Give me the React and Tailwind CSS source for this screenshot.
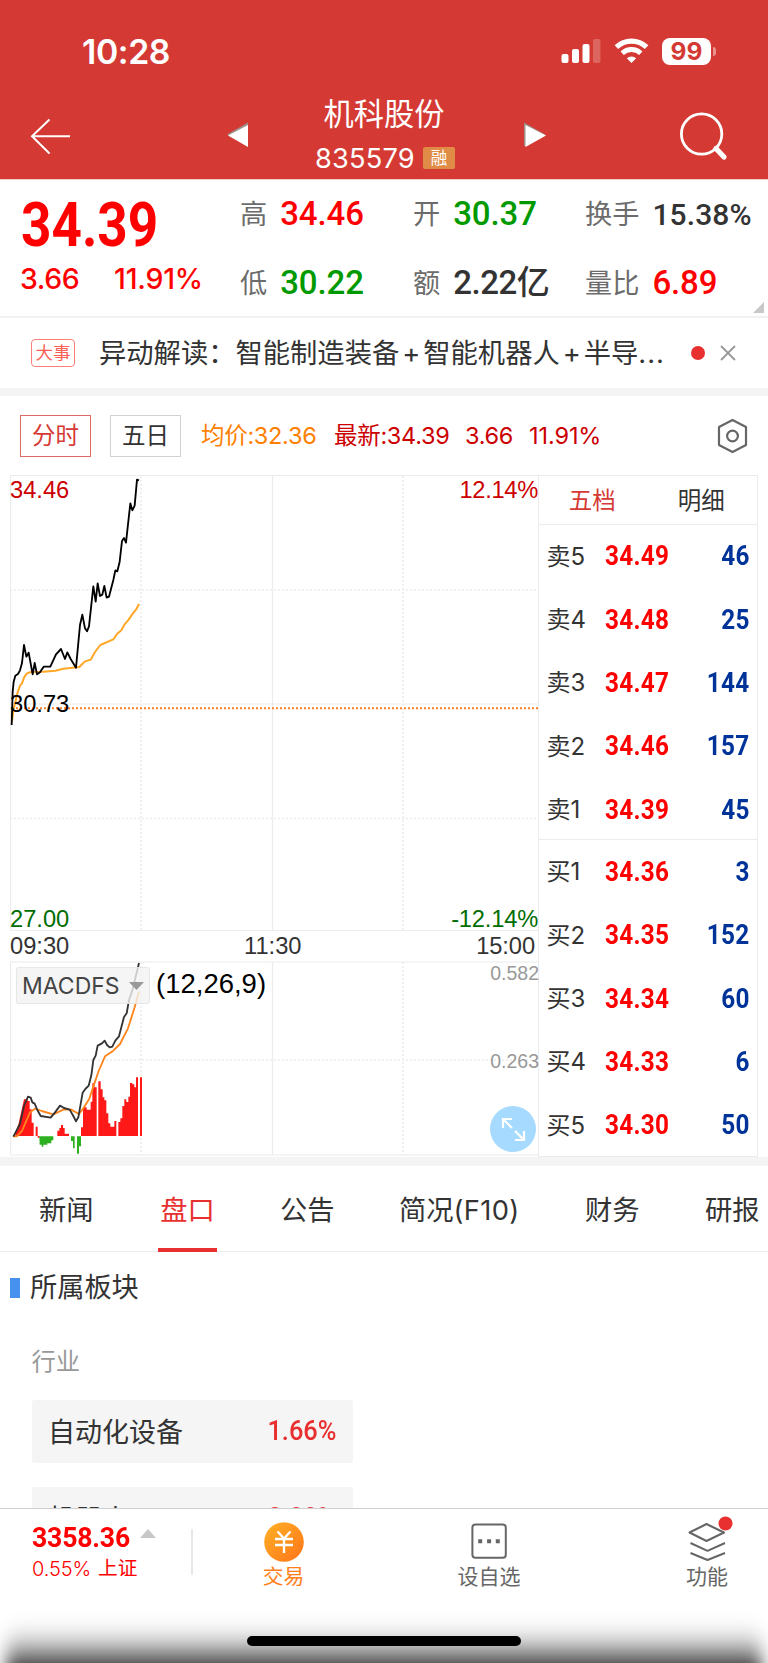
import React from "react";

const sans = "font-['Inter','Noto_Sans_CJK_SC',sans-serif]";
const din = "font-['Roboto','Noto_Sans_CJK_SC',sans-serif]";
const arial = "font-['Liberation_Sans','Noto_Sans_CJK_SC',sans-serif]";

const sells = [
  ["卖5", "34.49", "46"],
  ["卖4", "34.48", "25"],
  ["卖3", "34.47", "144"],
  ["卖2", "34.46", "157"],
  ["卖1", "34.39", "45"],
];
const buys = [
  ["买1", "34.36", "3"],
  ["买2", "34.35", "152"],
  ["买3", "34.34", "60"],
  ["买4", "34.33", "6"],
  ["买5", "34.30", "50"],
];

function StatusBar() {
  return (
    <div className="flex h-[103px] items-start pr-[52px] pl-[82px]">
      <div className="mt-[32px] text-[33.8px] leading-[40px] font-semibold tracking-[-0.4px]">10:28</div>
      <div className="mt-[37px] ml-auto flex h-7 items-center">
        <svg className="h-7 w-10" viewBox="0 0 40 28" fill="#fff">
          <rect x="0.5" y="17" width="7" height="9" rx="2" />
          <rect x="11" y="12" width="7" height="14" rx="2" />
          <rect x="21.5" y="7" width="7" height="19" rx="2" />
          <rect x="32" y="2" width="7.5" height="24" rx="2" opacity="0.22" />
        </svg>
        <svg className="ml-[13px] h-7 w-[35px]" viewBox="0 0 35 28" fill="none" stroke="#fff">
          <path d="M2.4 10.2 A22 22 0 0 1 32.6 10.2" strokeWidth="5.2" />
          <path d="M8.2 16.2 A13.5 13.5 0 0 1 26.8 16.2" strokeWidth="4.8" />
          <path d="M17.5 26 L12.8 21.2 A7 7 0 0 1 22.2 21.2 Z" fill="#fff" stroke="none" />
        </svg>
        <div className="ml-[13px] flex h-[27px] w-[49px] items-center justify-center rounded-[8px] bg-white pt-px text-[24.5px] leading-none font-bold text-[#d43a33]">99</div>
        <div className="ml-[2px] h-[9px] w-[3px] rounded-r-full bg-white/45" />
      </div>
    </div>
  );
}

function Header() {
  return (
    <header className={`${sans} h-[179px] bg-[#d43a33] text-white`}>
      <StatusBar />
      <div className="flex h-[76px]">
        <svg className="mt-[14px] ml-[30px] h-[40px] w-[42px]" viewBox="0 0 42 40" fill="none" stroke="#fff" strokeWidth="2">
          <path d="M40 19.3H2M19.5 2.5L2 19.3L19.5 36.5" />
        </svg>
        <svg className="mt-[18px] ml-[154px] h-[28px] w-[24px]" viewBox="0 0 24 28">
          <path d="M1 13.5L22 1.5V25.5Z" fill="#9d8f8b" />
          <path d="M2 14.5L22 4V26Z" fill="#fff" />
        </svg>
        <div className="flex w-[274px] flex-col items-center pr-[6px]">
          <div className="mt-[-9px] h-[40px] text-[30.2px] leading-[40px] font-normal">机科股份</div>
          <div className="mt-[9px] flex h-[30px] items-center gap-[8px] pl-[2px]">
            <span className="pt-[2px] text-[27.2px] leading-[30px] tracking-[0.2px]">835579</span>
            <span className="flex h-[22px] w-8 items-center justify-center rounded-[2px] bg-[#e08c46] text-[16.5px] leading-none">融</span>
          </div>
        </div>
        <svg className="mt-[18px] h-[28px] w-[24px]" viewBox="0 0 24 28">
          <path d="M0 1.5L21 13.5L0 25.5Z" fill="#9d8f8b" />
          <path d="M1.5 4L22 14.5L1.5 26Z" fill="#fff" />
        </svg>
        <svg className="mt-[7px] ml-[131px] h-[54px] w-[50px]" viewBox="0 0 50 54" fill="none" stroke="#fff">
          <circle cx="22.6" cy="24" r="20.2" strokeWidth="2.8" />
          <path d="M37 38.5L45 47" strokeWidth="5.2" strokeLinecap="round" />
        </svg>
      </div>
    </header>
  );
}

function Stat({ label, value, color, size = "text-[33px] tracking-[-0.1px]" }) {
  return (
    <div className="flex h-9 items-center">
      <span className="pt-px text-[27.2px] leading-9 font-normal text-[#6c6c6c]">{label}</span>
      <span className={`ml-[13px] ${din} ${size} leading-9 font-medium ${color}`}>{value}</span>
    </div>
  );
}

function Quote() {
  return (
    <section className={`${sans} relative flex h-[139px] border-t border-b-2 border-t-[#f3cfcd] border-b-[#f1f1f1] bg-white`}>
      <div className="w-[240px] pl-[20px] text-[#f00]">
        <div className={`${din} mt-[15px] ml-[1px] h-[60px] w-[160px] origin-left scale-x-[0.87] text-[61px] leading-[60px] font-bold`}>34.39</div>
        <div className="mt-[9px] flex h-[30px] text-[28.5px] leading-[30px] font-medium">
          <span className="w-[94px] tracking-[-0.4px]">3.66</span>
          <span className="tracking-[-0.2px]">11.91%</span>
        </div>
      </div>
      <div className="grid grid-cols-[173px_172px_180px] grid-rows-[69px_69px] pt-[16px]">
        <Stat label="高" value="34.46" color="text-[#f00]" />
        <Stat label="开" value="30.37" color="text-[#009a00]" />
        <Stat label="换手" value="15.38%" color="text-[#333]" size="mt-[2px] text-[30px] tracking-[0.1px]" />
        <Stat label="低" value="30.22" color="text-[#009a00]" />
        <Stat label="额" value="2.22亿" color="text-[#333]" size="text-[33px] tracking-[-0.5px]" />
        <Stat label="量比" value="6.89" color="text-[#f00]" />
      </div>
      <svg className="absolute right-[4px] bottom-[3px] h-[11px] w-[11px]" viewBox="0 0 11 11">
        <path d="M11 0V11H0Z" fill="#c8c8c8" />
      </svg>
    </section>
  );
}

function News() {
  return (
    <section className={`${sans} flex h-[78px] items-center border-b-8 border-[#f4f4f4] bg-white pl-[31px]`}>
      <div className="flex h-[28px] w-[44px] items-center justify-center rounded-[4px] border-[1.5px] border-[#fb8079] text-[17.5px] leading-none text-[#fb5f55]">大事</div>
      <div className="ml-[24px] flex w-[568px] pt-[2px] text-[27.3px] leading-[40px] whitespace-nowrap text-[#333]">
        <span>异动解读：智能制造装备</span>
        <span className="w-[24px] text-center">+</span>
        <span>智能机器人</span>
        <span className="w-[24px] text-center">+</span>
        <span>半导</span>
        <span className="tracking-[1px]">...</span>
      </div>
      <div className="ml-[24px] h-[14px] w-[14px] rounded-full bg-[#e93030]" />
      <svg className="ml-[15px] h-[16px] w-[16px]" viewBox="0 0 16 16" stroke="#999" strokeWidth="1.8">
        <path d="M1 1L15 15M15 1L1 15" />
      </svg>
    </section>
  );
}

function Controls() {
  return (
    <div className={`${sans} flex h-[79px] items-start bg-white pt-[19px] pl-[20px] text-[23.5px] leading-[40px] whitespace-nowrap`}>
      <div className="flex h-[42px] w-[71px] items-center justify-center border-[1.5px] border-[#dd6a64] text-[#d43a33]">分时</div>
      <div className="ml-[19px] flex h-[42px] w-[71px] items-center justify-center border-[1.5px] border-[#d2d2d2] text-[#333]">五日</div>
      <div className="ml-[20px] w-[133px] pt-[1px] tracking-[-0.3px] text-[#ff8000]">均价:32.36</div>
      <div className="w-[131px] pt-[1px] tracking-[-0.3px] text-[#c00]">最新:34.39</div>
      <div className="w-[64px] pt-[1px] tracking-[-0.3px] text-[#c00]">3.66</div>
      <div className="w-[188px] pt-[1px] tracking-[-0.1px] text-[#c00]">11.91%</div>
      <svg className="mt-[3px] h-[36px] w-[32px]" viewBox="0 0 32 36" fill="none" stroke="#666" strokeWidth="2.2">
        <path d="M15.5 2L29 9V27L15.5 34L2 27V9Z" strokeLinejoin="round" />
        <circle cx="15.5" cy="18" r="5.4" />
      </svg>
    </div>
  );
}

function ChartLines() {
  return (
    <svg className="block h-[682px] w-[528px]" viewBox="10 475 528 682" fill="none">
      <g stroke="#ececec" strokeWidth="1.2">
        <path d="M10 475.5H538M10 704H538M10 930.5H538M10 962H538M10 1155H538M10.5 475V930M10.5 962V1155M272.5 475V930M272.5 962V1155" />
        <path d="M141 476V930M141 962V1155M403 476V930M403 962V1155M10 590H538M10 818.5H538M10 1060H538" strokeDasharray="2 2" strokeWidth="1.5" />
      </g>
      <path d="M12 708.3H538" stroke="#ff7f27" strokeWidth="2" strokeDasharray="2 2" />
      <g transform="translate(0 465) scale(0.33333)" strokeLinejoin="round">
        <path d="M36 770L40 735L46 712L52 685L60 662L66 655L72 638L80 626L92 621L130 620L166 617L190 611L238 606L254 590L272 584L285 561L301 540L340 523L351 507L364 496L374 478L386 464L398 446L408 434L417 417" stroke="#ffa726" strokeWidth="6" />
        <path d="M35 780L38 680L41 650L46 632L54 627L60 616L66 594L72 540L79 575L86 563L98 628L104 594L111 628L120 622L131 605L151 605L168 568L183 552L195 582L202 562L212 582L228 608L240 480L247 449L255 490L261 499L267 484L280 364L287 410L293 355L300 393L307 389L313 363L320 398L327 395L340 345L346 316L352 319L359 290L366 228L372 219L378 233L391 115L397 136L404 122L411 44L417 46" stroke="#000" strokeWidth="5.5" />
      </g>
      <g transform="translate(0 900) scale(0.33333)" strokeLinejoin="round">
        <g fill="#ff1818">
          <path d="M46 708V700L56 670L72 598H83V603H89V628H95V668H101V708ZM107 708V680H113V708H119V713H113V708ZM172 708V692H178V684H183V675H189V684H194V701H207V708ZM243 708V682H249V622H260V629H272V605H277V550H283V562H290V708ZM295 708V544H302V568H308V592H313V601H319V640H325V670H331V680H343V663H349V708ZM355 708V666H361V655H367V618H373V598H379V606H385V590H390V549H397V553H403V562H408V532H414V708ZM420 708V532H426V708Z" />
        </g>
        <path d="M118 709H160V721H154V730H142V734H130V740H125V734H119ZM213 709H224V745H219V723H213ZM231 709H243V739H237V761H231Z" fill="#2eb121" />
        <path d="M40 710L52 708L66 693L78 665L90 637L105 626L125 633L160 643L190 629L212 628L237 642L252 622L268 596L280 560L296 513L315 469L340 452L360 432L384 385L404 322L417 275" stroke="#ff851b" strokeWidth="5.5" />
        <path d="M40 710L60 672L72 618L84 590L92 593L97 607L104 611L112 630L122 648L152 653L165 637L180 617L192 624L209 629L220 648L228 664L235 652L248 578L256 567L266 557L274 526L280 480L287 467L293 437L306 430L314 422L321 435L329 442L337 440L346 422L357 409L372 351L380 340L387 300L398 268L417 189" stroke="#333" strokeWidth="5.5" />
      </g>
    </svg>
  );
}

function Chart() {
  return (
    <div className={`${arial} relative h-[682px] w-[528px] text-[23.7px] leading-none`}>
      <ChartLines />
      <div className="absolute top-[4px] left-0 text-[#c00]">34.46</div>
      <div className="absolute top-[4px] right-0 tracking-[-0.3px] text-[#c00]">12.14%</div>
      <div className="absolute top-[218px] left-0 text-black">30.73</div>
      <div className="absolute top-[433px] left-0 text-[#006d00]">27.00</div>
      <div className="absolute top-[433px] right-0 tracking-[-0.2px] text-[#006d00]">-12.14%</div>
      <div className="absolute top-[460px] left-0 text-[#333]">09:30</div>
      <div className="absolute top-[460px] left-[234px] text-[#333]">11:30</div>
      <div className="absolute top-[460px] right-[3px] tracking-[-0.1px] text-[#333]">15:00</div>
      <div className="absolute top-[489px] right-[-1px] text-[19.5px] text-[#999]">0.582</div>
      <div className="absolute top-[577px] right-[-1px] text-[19.5px] text-[#999]">0.263</div>
      <div className={`${sans} absolute top-[492px] left-[6px] flex h-[37px] w-[134px] items-center rounded-[3px] border border-[#e3e3e3]/80 bg-[#f2f2f2]/80 pt-px pl-[5px] text-[23px] text-[#444]`}>
        MACDFS
        <svg className="ml-[9px] h-[8px] w-[15px]" viewBox="0 0 15 8">
          <path d="M0 0H15L7.5 8Z" fill="#999" />
        </svg>
      </div>
      <div className="absolute top-[495px] left-[146px] text-[27.5px] text-black">(12,26,9)</div>
      <svg className="absolute top-[631px] left-[480px] h-[46px] w-[46px]" viewBox="0 0 46 46" fill="none" stroke="#fff" strokeWidth="2.2">
        <circle cx="23" cy="23" r="23" fill="#a6daff" stroke="none" />
        <path d="M22 22L13.5 13.5M13 22V13H22M25 25L33.5 33.5M34 25V34H25" />
      </svg>
    </div>
  );
}

function Level({ row }) {
  return (
    <div className="flex h-[63.3px] shrink-0 items-center pr-[7px] pl-[7.5px]">
      <span className={`${sans} w-[58.5px] text-[24px] text-[#333]`}>{row[0]}</span>
      <span className={`${din} origin-left scale-x-[0.9] text-[27px] font-bold tracking-[0.3px] text-[#f00]`}>{row[1]}</span>
      <span className={`${din} ml-auto origin-right scale-x-[0.9] text-[27px] font-bold tracking-[0.4px] text-[#003399]`}>{row[2]}</span>
    </div>
  );
}

function OrderBook() {
  return (
    <div className="h-[682px] w-[220px] border border-[#ececec]">
      <div className={`${sans} flex h-[49px] items-center border-b border-[#ececec] text-[23.5px]`}>
        <div className="w-[108px] pt-px text-center text-[#d43a33]">五档</div>
        <div className="w-[113px] pt-px text-center text-[#333]">明细</div>
      </div>
      <div className="flex h-[315px] flex-col border-b border-[#ececec]">
        {sells.map((r) => <Level key={r[0]} row={r} />)}
      </div>
      <div className="pt-[0.8px]">
        {buys.map((r) => <Level key={r[0]} row={r} />)}
      </div>
    </div>
  );
}

function Tabs() {
  return (
    <nav className={`${sans} flex h-[95px] items-start border-t-[9px] border-b border-t-[#f4f4f4] border-b-[#ececec] pl-[39px] text-[27.3px] whitespace-nowrap text-[#333]`}>
      <div className="w-[119px] pt-[25px] leading-[40px]">新闻</div>
      <div className="h-[86px] w-[59px] border-b-4 border-[#e93030] pt-[25px] text-center leading-[40px] text-[#e93030]">盘口</div>
      <div className="ml-[63px] w-[119px] pt-[25px] leading-[40px]">公告</div>
      <div className="w-[186px] pt-[25px] leading-[40px]">简况<span className="tracking-[0.3px]">(F10)</span></div>
      <div className="w-[120px] pt-[25px] leading-[40px]">财务</div>
      <div className="pt-[25px] leading-[40px]">研报</div>
    </nav>
  );
}

function SectorCard({ name, change }) {
  return (
    <div className="flex h-[63px] w-[321px] items-center justify-between rounded-[3px] bg-[#f5f5f5] pr-[17px] pl-[16px]">
      <span className="pt-[2px] text-[27px] leading-[40px] text-[#333]">{name}</span>
      <span className={`${din} origin-right scale-x-[0.94] pb-[2px] text-[27px] leading-[40px] font-medium text-[#e93030]`}>{change}</span>
    </div>
  );
}

function Sectors() {
  return (
    <section className={`${sans} h-[256px] overflow-hidden`}>
      <div className="flex h-[71px] items-center pl-[10px]">
        <div className="h-[20px] w-[10px] bg-[#4691ee]" />
        <div className="ml-[10px] text-[27.2px] leading-[40px] text-[#333]">所属板块</div>
      </div>
      <div className="mt-[18px] pl-[31.5px] text-[24.3px] leading-[40px] text-[#999]">行业</div>
      <div className="mt-[19px] flex flex-col gap-[24px] pl-[32px]">
        <SectorCard name="自动化设备" change="1.66%" />
        <SectorCard name="机器人" change="0.88%" />
      </div>
    </section>
  );
}

function BottomBar() {
  return (
    <footer className={`${sans} relative flex h-[155px] overflow-hidden border-t border-[#cfcfcf] bg-white text-[21px]`}>
      <div className="mt-[15px] h-[64px] w-[160px] pl-[32px] text-[#f00]">
        <div className="flex h-[28px] gap-[8px]">
          <span className={`${din} w-[100px] shrink-0 origin-left scale-x-[0.95] text-[28px] leading-[28px] font-bold tracking-[-0.2px]`}>3358.36</span>
          <svg className="mt-[5px] h-[9px] w-[16px] shrink-0" viewBox="0 0 16 9">
            <path d="M8 0L16 9H0Z" fill="#c8c8c8" />
          </svg>
        </div>
        <div className="mt-[2px] flex h-[28px] items-center gap-[8px] text-[19.7px] leading-[28px] whitespace-nowrap">
          <span className="w-[58px] pt-px text-[20px] font-light tracking-[-0.1px]">0.55%</span>
          <span>上证</span>
        </div>
      </div>
      <div className="mt-[20px] ml-[31px] h-[46px] w-[1.5px] bg-[#e8e8e8]" />
      <div className="mt-[13px] ml-[41px] flex w-[100px] flex-col items-center text-[#ff7f1a]">
        <svg className="h-[40px] w-[40px]" viewBox="0 0 40 40" fill="none">
          <defs>
            <linearGradient id="trade" x1="0" y1="0" x2="1" y2="1">
              <stop offset="0.1" stopColor="#ffab24" />
              <stop offset="0.9" stopColor="#ff7a1a" />
            </linearGradient>
          </defs>
          <circle cx="20" cy="20" r="19.8" fill="url(#trade)" />
          <path d="M13.5 9.5L20 16.5L26.5 9.5M11 17H29M11 23H29M20 16.5V31" stroke="#fff" strokeWidth="2.4" />
        </svg>
        <span className="mt-[1px] text-[20.8px] leading-[28px]">交易</span>
      </div>
      <div className="mt-[12px] ml-[105.5px] flex w-[100px] flex-col items-center text-[#666]">
        <svg className="h-[40px] w-[40px]" viewBox="0 0 40 40" fill="none">
          <rect x="3.4" y="3.4" width="33.4" height="33.4" rx="3" stroke="#666" strokeWidth="2" />
          <path d="M9.2 18.2h4v4h-4zM18.1 18.2h4v4h-4zM26.8 18.2h4v4h-4z" fill="#666" />
        </svg>
        <span className="mt-[2px] text-[21px] leading-[28px]">设自选</span>
      </div>
      <div className="mt-[5px] ml-[118px] flex w-[100px] flex-col items-center text-[#666]">
        <svg className="h-[47px] w-[56px]" viewBox="0 0 56 47" fill="none" stroke="#666" strokeWidth="2" strokeLinejoin="round">
          <path d="M10.5 18.5L27.5 10L45 18.5L27.5 27Z" />
          <path d="M11.5 29L28.5 36.8L46 29M11.5 39L28.5 46L46 39" />
          <circle cx="46.5" cy="9.5" r="7" fill="#e93030" stroke="none" />
        </svg>
        <span className="mt-[2px] text-[21px] leading-[28px]">功能</span>
      </div>
      <svg className="absolute bottom-0 left-0 h-[60px] w-[768px]" viewBox="0 0 768 60">
        <defs>
          <filter id="soft" x="-10%" y="-100%" width="120%" height="300%">
            <feGaussianBlur stdDeviation="8 19" />
          </filter>
        </defs>
        <rect x="5" y="54" width="758" height="80" rx="14" fill="#000" filter="url(#soft)" />
      </svg>
      <div className="absolute bottom-[17px] left-[247px] h-[10px] w-[274px] rounded-full bg-black" />
    </footer>
  );
}

export default function App() {
  return (
    <div className="flex h-[1663px] w-[768px] flex-col overflow-hidden bg-white">
      <Header />
      <Quote />
      <News />
      <Controls />
      <div className="flex pl-[10px]">
        <Chart />
        <OrderBook />
      </div>
      <Tabs />
      <Sectors />
      <BottomBar />
    </div>
  );
}
